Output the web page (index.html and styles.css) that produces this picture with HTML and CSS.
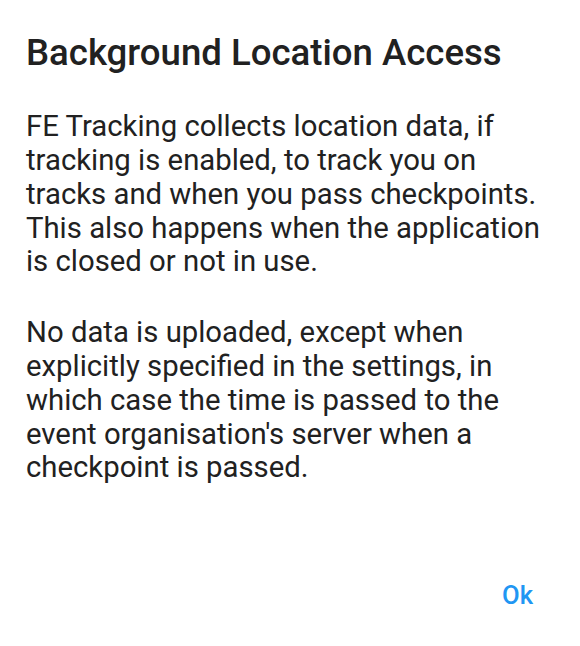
FILE: index.html
```html
<!DOCTYPE html>
<html>
<head>
<meta charset="utf-8">
<link rel="stylesheet" href="styles.css">
</head>
<body>
<div class="dialog">
  <h1 class="title">Background Location Access</h1>
  <div class="message">
    <p class="para">FE Tracking collects location data, if tracking is enabled, to track you on tracks and when you pass checkpoints. This also happens when the application is closed or not in use.</p>
    <p class="para">No data is uploaded, except when explicitly specified in the settings, in which case the time is passed to the event organisation's server when a checkpoint is passed.</p>
  </div>
  <div class="actions">
    <button class="btn">Ok</button>
  </div>
</div>
</body>
</html>
```
FILE: styles.css
```css
html, body {
  margin: 0;
  padding: 0;
  background: #ffffff;
}
body {
  font-family: Roboto, "Noto Sans", sans-serif;
  width: 580px;
  height: 646px;
  overflow: hidden;
}
.dialog {
  display: flex;
  flex-direction: column;
  height: 646px;
  box-sizing: border-box;
  padding: 30px 0 27px 26px;
}
.title {
  margin: 0;
  font-size: 36.6px;
  font-weight: 500;
  line-height: 45px;
  color: #212121;
}
.message {
  margin-top: 35.2px;
  padding-right: 26px;
  display: flex;
  flex-direction: column;
  gap: 37px;
}
.para {
  margin: 0;
  font-size: 29.3px;
  line-height: 33.8px;
  color: #212121;
}
.actions {
  margin-top: auto;
  display: flex;
  justify-content: flex-end;
  padding-right: 31px;
}
.btn {
  border: none;
  background: none;
  font-family: Roboto, sans-serif;
  font-size: 25.6px;
  font-weight: 500;
  color: #2196f3;
  padding: 6px 16px;
  line-height: 36px;
  margin: 0;
}
```
